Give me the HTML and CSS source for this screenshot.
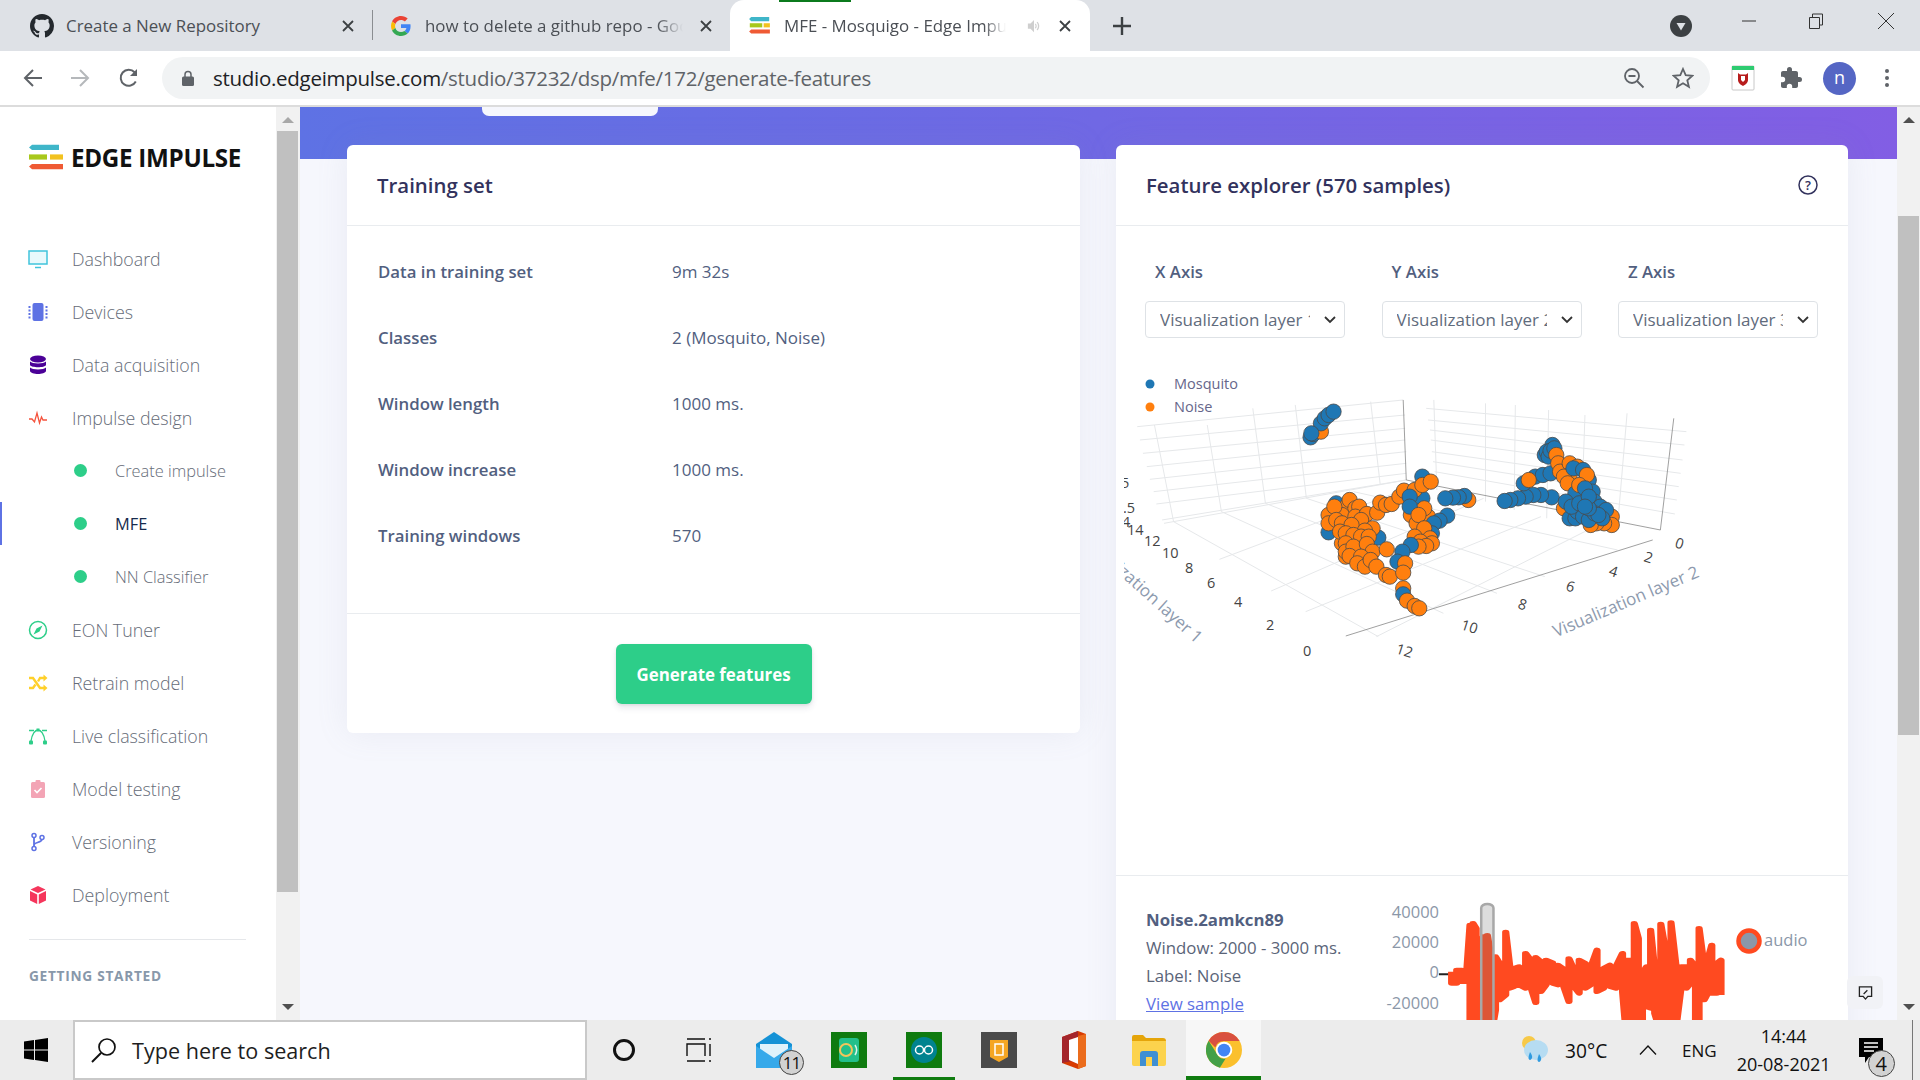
FILE: index.html
```html
<!DOCTYPE html>
<html lang="en">
<head>
<meta charset="utf-8">
<title>MFE - Mosquigo - Edge Impulse</title>
<link rel="stylesheet" href="styles.css">
</head>
<body>
<header class="tabstrip">
  <div class="tab tab-one">
    <svg class="fav" viewBox="0 0 16 16" width="24" height="24"><path fill="#24292e" d="M8 0C3.58 0 0 3.58 0 8c0 3.54 2.29 6.53 5.47 7.59.4.07.55-.17.55-.38 0-.19-.01-.82-.01-1.49-2.01.37-2.53-.49-2.69-.94-.09-.23-.48-.94-.82-1.13-.28-.15-.68-.52-.01-.53.63-.01 1.08.58 1.23.82.72 1.21 1.87.87 2.33.66.07-.52.28-.87.51-1.07-1.78-.2-3.64-.89-3.64-3.95 0-.87.31-1.59.82-2.15-.08-.2-.36-1.02.08-2.12 0 0 .67-.21 2.2.82.64-.18 1.32-.27 2-.27.68 0 1.36.09 2 .27 1.53-1.04 2.2-.82 2.2-.82.44 1.1.16 1.92.08 2.12.51.56.82 1.27.82 2.15 0 3.07-1.87 3.75-3.65 3.95.29.25.54.73.54 1.48 0 1.07-.01 1.93-.01 2.2 0 .21.15.46.55.38A8.013 8.013 0 0016 8c0-4.42-3.58-8-8-8z"/></svg>
    <span class="tab-title">Create a New Repository</span>
    <svg class="tab-x" viewBox="0 0 12 12" width="12" height="12"><path d="M1 1l10 10M11 1L1 11" stroke="#3c4043" stroke-width="1.8"/></svg>
  </div>
  <div class="tab-sep"></div>
  <div class="tab tab-two">
    <svg class="fav" viewBox="0 0 48 48" width="20" height="20"><path fill="#EA4335" d="M24 9.5c3.54 0 6.71 1.22 9.21 3.6l6.85-6.85C35.9 2.38 30.47 0 24 0 14.62 0 6.51 5.38 2.56 13.22l7.98 6.19C12.43 13.72 17.74 9.5 24 9.5z"/><path fill="#4285F4" d="M46.98 24.55c0-1.57-.15-3.09-.38-4.55H24v9.02h12.94c-.58 2.96-2.26 5.48-4.78 7.18l7.73 6c4.51-4.18 7.09-10.36 7.09-17.65z"/><path fill="#FBBC05" d="M10.53 28.59c-.48-1.45-.76-2.99-.76-4.59s.27-3.14.76-4.59l-7.98-6.19C.92 16.46 0 20.12 0 24c0 3.88.92 7.54 2.56 10.78l7.97-6.19z"/><path fill="#34A853" d="M24 48c6.48 0 11.93-2.13 15.89-5.81l-7.73-6c-2.15 1.45-4.92 2.3-8.16 2.3-6.26 0-11.57-4.22-13.47-9.91l-7.98 6.19C6.51 42.62 14.62 48 24 48z"/></svg>
    <span class="tab-title fade">how to delete a github repo - Google</span>
    <svg class="tab-x" viewBox="0 0 12 12" width="12" height="12"><path d="M1 1l10 10M11 1L1 11" stroke="#3c4043" stroke-width="1.8"/></svg>
  </div>
  <div class="tab tab-active">
    <svg class="fav" viewBox="0 0 30 26" width="21" height="18"><path fill="#3fb6c9" d="M3 0h26v6H3L0 3z"/><path fill="#a8c81c" d="M1 9h18v6H1z"/><path fill="#f2c21f" d="M21 9h9v6h-9z"/><path fill="#ef5a34" d="M3 18h27v6H3l-3-3z"/></svg>
    <span class="tab-title fade">MFE - Mosquigo - Edge Impulse</span>
    <svg class="tab-speaker" viewBox="0 0 16 16" width="14" height="14"><path fill="#cfcfcf" d="M1 5h3l4-4v14l-4-4H1zM10 5c1.5 1.5 1.500 4.500 0 6l-1-1c1-1 1-3 0-4zM12 3c2.700 2.700 2.700 7.300 0 10l-1-1c2-2 2-6 0-8z"/></svg>
    <svg class="tab-x" viewBox="0 0 12 12" width="12" height="12"><path d="M1 1l10 10M11 1L1 11" stroke="#3c4043" stroke-width="1.8"/></svg>
    <div class="audio-bar"></div>
  </div>
  <svg class="plus" viewBox="0 0 18 18" width="18" height="18"><path d="M9 0v18M0 9h18" stroke="#3c4043" stroke-width="2.400"/></svg>
  <svg class="tabsearch" viewBox="0 0 22 22" width="22" height="22"><circle cx="11" cy="11" r="11" fill="#3c4043"/><path d="M6.500 8h9L11 15.500z" fill="#dee1e6"/></svg>
  <svg class="win-btn win-min" viewBox="0 0 18 18" width="18" height="18"><path d="M2 9h14" stroke="#333" stroke-width="1"/></svg>
  <svg class="win-btn win-max" viewBox="0 0 18 18" width="18" height="18"><path d="M2.500 5.500h10v11h-10zM5.500 5.500v-3.500h10v11h-3" fill="none" stroke="#333" stroke-width="1"/></svg>
  <svg class="win-btn win-close" viewBox="0 0 18 18" width="18" height="18"><path d="M1 1l16 16M17 1L1 17" stroke="#333" stroke-width="1"/></svg>
</header>

<nav class="toolbar">
  <svg class="tool-back" viewBox="0 0 20 20" width="20" height="20"><path d="M19 10H2M10 2l-8 8 8 8" fill="none" stroke="#5f6368" stroke-width="2"/></svg>
  <svg class="tool-fwd" viewBox="0 0 20 20" width="20" height="20"><path d="M1 10h17M10 2l8 8-8 8" fill="none" stroke="#b5b8bb" stroke-width="2"/></svg>
  <svg class="tool-reload" viewBox="0 0 20 20" width="20" height="20"><path d="M16.800 13.500A8 8 0 1 1 15.600 4.300" fill="none" stroke="#5f6368" stroke-width="2"/><path d="M18 1v7h-7z" fill="#5f6368"/></svg>
  <div class="omnibox">
    <svg class="lock" viewBox="0 0 12 16" width="12" height="16"><path d="M3 7V4.500a3 3 0 0 1 6 0V7" fill="none" stroke="#5f6368" stroke-width="1.500"/><rect x="0" y="6.500" width="12" height="9.500" rx="1.500" fill="#5f6368"/></svg>
    <span class="url"><span class="url-host">studio.edgeimpulse.com</span>/studio/37232/dsp/mfe/172/generate-features</span>
    <svg class="omni-zoom" viewBox="0 0 22 22" width="22" height="22"><circle cx="9" cy="9" r="7" fill="none" stroke="#5f6368" stroke-width="1.800"/><path d="M5.500 9h7M14 14l6.500 6.500" stroke="#5f6368" stroke-width="1.800"/></svg>
    <svg class="omni-star" viewBox="0 0 22 22" width="22" height="22"><path d="M11 2l2.700 6.200 6.700.6-5.100 4.400 1.600 6.600L11 16.300l-5.900 3.500 1.600-6.600L1.600 8.800l6.700-.6z" fill="none" stroke="#5f6368" stroke-width="1.800"/></svg>
  </div>
  <svg class="ext" viewBox="0 0 24 26" width="24" height="26"><rect x="1" y="1" width="22" height="24" rx="1" fill="#fff" stroke="#c8c8c8"/><rect x="1" y="1" width="22" height="4" fill="#2ecc71"/><path d="M7 8l2 1.500h6L17 8v7c0 3-3 5-5 6-2-1-5-3-5-6z" fill="#b71c1c"/><path d="M10 11h4v4l-2 2-2-2z" fill="#fff"/></svg>
  <svg class="puzzle" viewBox="0 0 24 24" width="24" height="24"><path fill="#5f6368" d="M20.500 11H19V7c0-1.100-.9-2-2-2h-4V3.500a2.500 2.500 0 0 0-5 0V5H4c-1.100 0-2 .9-2 2v3.800h1.500a2.700 2.700 0 0 1 0 5.400H2V20c0 1.100.9 2 2 2h3.800v-1.500a2.700 2.700 0 0 1 5.400 0V22H17c1.100 0 2-.9 2-2v-4h1.500a2.500 2.500 0 0 0 0-5z"/></svg>
  <div class="avatar">n</div>
  <svg class="kebab" viewBox="0 0 6 22" width="6" height="22"><circle cx="3" cy="4" r="2" fill="#5f6368"/><circle cx="3" cy="11" r="2" fill="#5f6368"/><circle cx="3" cy="18" r="2" fill="#5f6368"/></svg>
</nav>

<div class="viewport">
  <aside class="sidebar">
    <div class="side-inner">
      <div class="logo">
        <svg viewBox="0 0 36 30" width="36" height="26" preserveAspectRatio="none"><path fill="#3fb6c9" d="M3 1h27v6H3L0 4z"/><path fill="#a8c81c" d="M0 12h18v6H0z"/><path fill="#f2c21f" d="M21 12h13v6H21z"/><path fill="#ef5a34" d="M3 23h31v6H3l-3-3z"/></svg>
        <span>EDGE IMPULSE</span>
      </div>
      <ul class="menu">
        <li class="item"><svg class="ico" viewBox="0 0 20 20"><rect x="1" y="2" width="18" height="13" fill="#e8f9fc" stroke="#40c4dc" stroke-width="1.500"/><path d="M7 18.500h6" stroke="#40c4dc" stroke-width="1.500"/></svg><span>Dashboard</span></li>
        <li class="item"><svg class="ico" viewBox="0 0 20 20"><rect x="4.500" y="1" width="11" height="18" rx="2" fill="#5e72e4"/><path d="M1.500 4v13M18.500 4v13" stroke="#5e72e4" stroke-width="2" stroke-dasharray="2 1.500"/></svg><span>Devices</span></li>
        <li class="item"><svg class="ico" viewBox="0 0 20 20"><ellipse cx="10" cy="4" rx="8" ry="3.500" fill="#4b0097"/><path d="M2 6.500c2 2.500 14 2.500 16 0v3.500c-1 3-15 3-16 0zM2 12.500c2 2.500 14 2.500 16 0V16c-1 4-15 4-16 0z" fill="#4b0097"/></svg><span>Data acquisition</span></li>
        <li class="item"><svg class="ico" viewBox="0 0 20 20"><path d="M1 11h3l2.500 3L9 5l2.500 10L13.500 9l1.500 3h4" fill="none" stroke="#f5533d" stroke-width="1.300"/></svg><span>Impulse design</span></li>
        <li class="item sub"><i class="dot"></i><span>Create impulse</span></li>
        <li class="item sub active"><i class="dot"></i><span>MFE</span></li>
        <li class="item sub"><i class="dot"></i><span>NN Classifier</span></li>
        <li class="item"><svg class="ico" viewBox="0 0 20 20"><circle cx="10" cy="10" r="8.500" fill="none" stroke="#2dce89" stroke-width="1.500"/><path d="M14.500 5.500L11.500 11.500 5.500 14.500 8.500 8.500z" fill="#2dce89"/></svg><span>EON Tuner</span></li>
        <li class="item"><svg class="ico" viewBox="0 0 20 20"><path d="M1 5h4l7 10h4M1 15h4l2.500-3.500M10 8.500L12 5h4" fill="none" stroke="#ffd02a" stroke-width="2.400"/><path d="M15.500 1.500l4 3.500-4 3.500zM15.500 11.500l4 3.500-4 3.500z" fill="#ffd02a"/></svg><span>Retrain model</span></li>
        <li class="item"><svg class="ico" viewBox="0 0 20 20"><path d="M3 15C4 8 7 4 10 4s6 4 7 11" fill="none" stroke="#2dce89" stroke-width="1.300"/><path d="M1 4.500h5M14 4.500h5" stroke="#2dce89" stroke-width="1.300"/><rect x="1" y="14.500" width="4" height="4" rx="1" fill="#2dce89"/><rect x="15" y="14.500" width="4" height="4" rx="1" fill="#2dce89"/><rect x="8.500" y="2.500" width="3" height="3" fill="#2dce89"/></svg><span>Live classification</span></li>
        <li class="item"><svg class="ico" viewBox="0 0 20 20"><rect x="3" y="3" width="14" height="16" rx="1.500" fill="#f3a4b5"/><rect x="7.500" y="1" width="5" height="4" rx="1" fill="#f3a4b5"/><path d="M6.500 11l2.500 2.500 4.500-4.500" fill="none" stroke="#fff" stroke-width="1.600"/></svg><span>Model testing</span></li>
        <li class="item"><svg class="ico" viewBox="0 0 20 20"><path d="M6 5v10M6 13c0-3 8-2 8-6" fill="none" stroke="#5e72e4" stroke-width="1.800"/><circle cx="6" cy="3.500" r="2" fill="#fff" stroke="#5e72e4" stroke-width="1.500"/><circle cx="6" cy="16.500" r="2" fill="#fff" stroke="#5e72e4" stroke-width="1.500"/><circle cx="14" cy="5.500" r="2" fill="#fff" stroke="#5e72e4" stroke-width="1.500"/></svg><span>Versioning</span></li>
        <li class="item"><svg class="ico" viewBox="0 0 20 20"><path d="M10 1l7.500 3.500L10 8 2.500 4.500z" fill="#f5365c"/><path d="M2 6l7.200 3.500V19L2 15.500zM18 6l-7.200 3.500V19l7.200-3.500z" fill="#f5365c"/></svg><span>Deployment</span></li>
      </ul>
      <hr class="side-rule">
      <div class="side-head">GETTING STARTED</div>
    </div>
    <div class="vscroll vscroll-left">
      <i class="arrow up"></i>
      <div class="thumb thumb-left"></div>
      <i class="arrow down"></i>
    </div>
  </aside>

  <main class="main">
    <div class="band"><div class="pill"></div></div>
    <div class="cards">
      <section class="card card-train">
        <h2 class="card-title">Training set</h2>
        <dl class="stats">
          <div class="stat"><dt>Data in training set</dt><dd>9m 32s</dd></div>
          <div class="stat"><dt>Classes</dt><dd>2 (Mosquito, Noise)</dd></div>
          <div class="stat"><dt>Window length</dt><dd>1000 ms.</dd></div>
          <div class="stat"><dt>Window increase</dt><dd>1000 ms.</dd></div>
          <div class="stat"><dt>Training windows</dt><dd>570</dd></div>
        </dl>
        <div class="card-foot"><button class="btn" type="button">Generate features</button></div>
      </section>

      <section class="card card-explorer">
        <h2 class="card-title title-row">Feature explorer (570 samples)
          <svg class="help" viewBox="0 0 20 20" width="20" height="20"><circle cx="10" cy="10" r="9" fill="none" stroke="#32325d" stroke-width="1.500"/><text x="10" y="14.500" text-anchor="middle" class="help-q">?</text></svg>
        </h2>
        <div class="axes">
          <div class="axis"><label>X Axis</label><div class="select"><span>Visualization layer 1</span><svg viewBox="0 0 12 8" width="12" height="8"><path d="M1 1l5 5 5-5" fill="none" stroke="#333" stroke-width="1.800"/></svg></div></div>
          <div class="axis"><label>Y Axis</label><div class="select"><span>Visualization layer 2</span><svg viewBox="0 0 12 8" width="12" height="8"><path d="M1 1l5 5 5-5" fill="none" stroke="#333" stroke-width="1.800"/></svg></div></div>
          <div class="axis"><label>Z Axis</label><div class="select"><span>Visualization layer 3</span><svg viewBox="0 0 12 8" width="12" height="8"><path d="M1 1l5 5 5-5" fill="none" stroke="#333" stroke-width="1.800"/></svg></div></div>
        </div>

        <svg class="plot" viewBox="4 0 596 320" width="596" height="320">
          <g transform="scale(.3827 .3333)">
            <g class="grid">
              <path d="M45 200L740 120M52 240L745 165M60 280L745 205M70 320L745 240M78 358L748 275M88 395L748 310M95 432L748 340M115 490L748 360"/>
              <path d="M90 195L140 485M228 195L265 455M347 145L380 430M458 135L487 415M655 125L680 375"/>
              <path d="M800 145L1480 215M805 180L1475 255M810 210L1470 300M812 240L1465 340M815 275L1460 380M818 305L1455 420M822 335L1450 462"/>
              <path d="M820 120L828 390M955 130L955 425M1033 135L1030 450M1120 150L1115 475M1215 165L1205 490M1325 160L1300 500"/>
              <path d="M140 485L675 830M265 455L845 760M380 430L985 700M487 415L1110 650M610 395L1300 570"/>
              <path d="M110 480L748 360M260 598L810 360M395 693L950 415M485 755L1100 470M670 830L1240 500"/>
            </g>
            <path class="axisline" d="M740 120L748 360M1447 175L1412 510M748 360L1412 510M590 828L1392 540"/>
            <g class="pts">
              <ellipse class="b" cx="498" cy="232"/><ellipse class="b" cx="505" cy="222"/><ellipse class="o" cx="525" cy="215"/><ellipse class="b" cx="525" cy="190"/><ellipse class="b" cx="535" cy="175"/><ellipse class="b" cx="545" cy="165"/><ellipse class="b" cx="558" cy="155"/><ellipse class="b" cx="500" cy="220"/>

              <ellipse class="b" cx="545" cy="517"/><ellipse class="b" cx="675" cy="533"/><ellipse class="b" cx="565" cy="430"/>
              <ellipse class="o" cx="590" cy="590"/><ellipse class="o" cx="580" cy="550"/><ellipse class="o" cx="545" cy="465"/><ellipse class="o" cx="595" cy="435"/><ellipse class="o" cx="600" cy="420"/><ellipse class="o" cx="615" cy="445"/><ellipse class="o" cx="625" cy="440"/><ellipse class="o" cx="580" cy="465"/><ellipse class="o" cx="615" cy="470"/><ellipse class="o" cx="645" cy="462"/><ellipse class="o" cx="672" cy="458"/><ellipse class="o" cx="680" cy="428"/><ellipse class="o" cx="695" cy="435"/><ellipse class="o" cx="710" cy="432"/><ellipse class="o" cx="730" cy="410"/><ellipse class="o" cx="742" cy="392"/><ellipse class="o" cx="545" cy="490"/><ellipse class="o" cx="560" cy="440"/><ellipse class="o" cx="565" cy="480"/><ellipse class="o" cx="580" cy="490"/><ellipse class="o" cx="630" cy="480"/><ellipse class="o" cx="605" cy="495"/><ellipse class="o" cx="660" cy="505"/><ellipse class="o" cx="640" cy="512"/><ellipse class="o" cx="575" cy="515"/><ellipse class="o" cx="590" cy="520"/><ellipse class="o" cx="610" cy="525"/><ellipse class="o" cx="630" cy="530"/><ellipse class="o" cx="650" cy="530"/><ellipse class="o" cx="590" cy="550"/><ellipse class="o" cx="590" cy="575"/><ellipse class="o" cx="610" cy="560"/><ellipse class="o" cx="645" cy="552"/><ellipse class="o" cx="660" cy="575"/><ellipse class="o" cx="600" cy="588"/><ellipse class="o" cx="630" cy="590"/><ellipse class="o" cx="620" cy="610"/><ellipse class="o" cx="640" cy="620"/><ellipse class="o" cx="655" cy="600"/><ellipse class="o" cx="670" cy="620"/><ellipse class="o" cx="695" cy="645"/><ellipse class="o" cx="705" cy="650"/>

              <ellipse class="b" cx="790" cy="350"/><ellipse class="b" cx="790" cy="415"/><ellipse class="o" cx="770" cy="390"/><ellipse class="o" cx="790" cy="375"/><ellipse class="o" cx="812" cy="365"/><ellipse class="b" cx="757" cy="410"/><ellipse class="o" cx="760" cy="465"/><ellipse class="o" cx="805" cy="470"/><ellipse class="o" cx="795" cy="445"/><ellipse class="b" cx="757" cy="440"/><ellipse class="o" cx="775" cy="490"/><ellipse class="o" cx="780" cy="465"/><ellipse class="b" cx="855" cy="467"/><ellipse class="b" cx="835" cy="482"/><ellipse class="b" cx="820" cy="490"/><ellipse class="b" cx="815" cy="520"/><ellipse class="o" cx="795" cy="505"/><ellipse class="o" cx="770" cy="530"/><ellipse class="o" cx="810" cy="535"/><ellipse class="o" cx="785" cy="545"/><ellipse class="o" cx="815" cy="550"/><ellipse class="o" cx="800" cy="558"/><ellipse class="o" cx="780" cy="560"/><ellipse class="b" cx="760" cy="555"/><ellipse class="b" cx="738" cy="575"/><ellipse class="b" cx="725" cy="605"/><ellipse class="o" cx="745" cy="610"/><ellipse class="o" cx="740" cy="638"/><ellipse class="o" cx="697" cy="568"/>
              <ellipse class="o" cx="740" cy="685"/><ellipse class="b" cx="740" cy="703"/><ellipse class="o" cx="750" cy="722"/><ellipse class="o" cx="770" cy="738"/><ellipse class="o" cx="782" cy="745"/>

              <ellipse class="o" cx="910" cy="420"/><ellipse class="b" cx="900" cy="408"/><ellipse class="b" cx="885" cy="412"/><ellipse class="b" cx="870" cy="413"/><ellipse class="b" cx="850" cy="415"/>

              <ellipse class="b" cx="1128" cy="412"/><ellipse class="b" cx="1100" cy="405"/><ellipse class="b" cx="1080" cy="405"/><ellipse class="b" cx="1060" cy="410"/><ellipse class="b" cx="1040" cy="415"/><ellipse class="b" cx="1020" cy="420"/><ellipse class="b" cx="1005" cy="423"/>
              <ellipse class="b" cx="1055" cy="370"/><ellipse class="b" cx="1085" cy="350"/><ellipse class="b" cx="1105" cy="345"/><ellipse class="b" cx="1125" cy="340"/><ellipse class="o" cx="1068" cy="360"/>
              <ellipse class="b" cx="1130" cy="255"/><ellipse class="b" cx="1110" cy="285"/><ellipse class="b" cx="1115" cy="275"/><ellipse class="b" cx="1120" cy="290"/><ellipse class="b" cx="1125" cy="272"/><ellipse class="b" cx="1135" cy="265"/><ellipse class="o" cx="1140" cy="285"/><ellipse class="o" cx="1145" cy="310"/><ellipse class="o" cx="1150" cy="335"/><ellipse class="o" cx="1175" cy="310"/><ellipse class="o" cx="1175" cy="345"/><ellipse class="o" cx="1160" cy="350"/><ellipse class="o" cx="1195" cy="320"/><ellipse class="b" cx="1185" cy="325"/><ellipse class="b" cx="1210" cy="330"/><ellipse class="b" cx="1225" cy="360"/><ellipse class="o" cx="1220" cy="345"/><ellipse class="o" cx="1170" cy="370"/><ellipse class="o" cx="1160" cy="445"/><ellipse class="b" cx="1190" cy="400"/><ellipse class="o" cx="1200" cy="375"/><ellipse class="b" cx="1235" cy="395"/><ellipse class="b" cx="1215" cy="385"/><ellipse class="o" cx="1285" cy="470"/><ellipse class="o" cx="1285" cy="495"/><ellipse class="o" cx="1265" cy="490"/><ellipse class="o" cx="1245" cy="490"/><ellipse class="o" cx="1230" cy="495"/><ellipse class="b" cx="1165" cy="425"/><ellipse class="b" cx="1175" cy="475"/><ellipse class="b" cx="1190" cy="475"/><ellipse class="b" cx="1195" cy="455"/><ellipse class="b" cx="1180" cy="440"/><ellipse class="b" cx="1240" cy="425"/><ellipse class="b" cx="1255" cy="440"/><ellipse class="b" cx="1270" cy="450"/><ellipse class="b" cx="1260" cy="475"/><ellipse class="b" cx="1210" cy="470"/><ellipse class="b" cx="1225" cy="480"/><ellipse class="b" cx="1240" cy="460"/><ellipse class="b" cx="1250" cy="465"/><ellipse class="b" cx="1225" cy="445"/><ellipse class="b" cx="1200" cy="430"/><ellipse class="b" cx="1225" cy="410"/><ellipse class="b" cx="1215" cy="440"/>
            </g>
          </g>
          <circle class="lg-b" cx="30" cy="24" r="4.500"/><text class="lg" x="54" y="29">Mosquito</text>
          <circle class="lg-o" cx="30" cy="47" r="4.500"/><text class="lg" x="54" y="52">Noise</text>
          <g class="tick">
            <text x="1" y="128">5</text><text x="3" y="153">.5</text><text x="2" y="167">4</text>
            <text x="7" y="175">14</text><text x="24" y="186">12</text><text x="42" y="198">10</text><text x="65" y="213">8</text><text x="87" y="228">6</text><text x="114" y="247">4</text><text x="146" y="270">2</text><text x="183" y="296">0</text>
            <text transform="translate(554 187) rotate(18)">0</text><text transform="translate(523 201) rotate(18)">2</text><text transform="translate(488 215) rotate(18)">4</text><text transform="translate(445 230) rotate(18)">6</text><text transform="translate(397 248) rotate(18)">8</text><text transform="translate(340 269) rotate(18)">10</text><text transform="translate(275 293) rotate(18)">12</text>
          </g>
          <text class="axis-title" transform="translate(76 284) rotate(42)" text-anchor="end">Visualization layer 1</text>
          <text class="axis-title" transform="translate(508 247) rotate(-23)" text-anchor="middle">Visualization layer 2</text>
        </svg>

        <div class="sample">
          <div class="sample-info">
            <strong>Noise.2amkcn89</strong>
            <span>Window: 2000 - 3000 ms.</span>
            <span>Label: Noise</span>
            <a href="#sample">View sample</a>
          </div>
          <svg class="wave" viewBox="0 0 430 150" width="430" height="150">
            <g class="wave-y">
              <text x="39" y="30">40000</text><text x="39" y="60">20000</text><text x="39" y="90">0</text><text x="39" y="121">-20000</text>
            </g>
            <g transform="translate(-280 -28) scale(.5102 .3333)">
              <path d="M625 343H1040" stroke="#222" stroke-width="2" vector-effect="non-scaling-stroke"/>
              <path class="wave-line" d="M650 335V370H660V330H670V365H680V325L686 195V480L692 520V190L698 205V520L704 500V320L712 230V520L720 520V226L728 300V520L736 450V290L744 310V420L756 405V216L764 320V385L772 380V325L782 320V375L795 385V280L805 300V380L815 428V292L825 305V395L835 375V300L848 308V370L858 375V315L868 325V372L880 425V296L890 330V380L900 400V300L912 310V385L922 375V325L935 270V395L948 385V325L960 315V380L972 385V320L985 280V395L992 520V300L1000 300V520L1008 520V190L1016 235V520L1024 500V340L1032 320V440L1040 445V210L1048 330V460L1060 520V192L1068 260V520L1080 520V188L1090 320V500L1100 380V320L1110 320V385L1118 370V300L1128 320V500L1135 510V205L1145 320V420L1152 400V300L1160 255V400L1170 400V310L1178 300V405"/>
              <rect class="wave-win" x="708" y="132" width="24" height="400" rx="12"/>
            </g>
            <circle class="wave-dot" cx="349" cy="53" r="10.500"/>
            <text class="wave-lg" x="364" y="58">audio</text>
          </svg>
        </div>
      </section>
    </div>
    <div class="feedback"><svg viewBox="0 0 16 16" width="15" height="16"><path d="M1.500 1.500h13v10h-4l-2.500 3-2.500-3h-4z" fill="none" stroke="#222" stroke-width="1.400"/><path d="M6 9l4-4" stroke="#222" stroke-width="1.400"/></svg></div>
  </main>

  <div class="vscroll vscroll-right">
    <i class="arrow up"></i>
    <div class="thumb thumb-right"></div>
    <i class="arrow down"></i>
  </div>
</div>

<footer class="taskbar">
  <div class="start"><svg viewBox="0 0 24 24" width="24" height="24"><path fill="#000" d="M0 3.400l10-1.400v9.500H0zM11 1.900L24 0v11.500H11zM0 12.500h10V22L0 20.600zM11 12.500h13V24l-13-1.900z"/></svg></div>
  <div class="search">
    <svg viewBox="0 0 26 26" width="26" height="26"><circle cx="16" cy="10" r="8" fill="none" stroke="#111" stroke-width="1.700"/><path d="M10 16L1 25" stroke="#111" stroke-width="1.900"/></svg>
    <span>Type here to search</span>
  </div>
  <div class="slots">
    <div class="slot"><i class="ring"></i></div>
    <div class="slot"><svg viewBox="0 0 26 24" width="26" height="24"><path d="M1 1h18M1 23h18M1 18V6h18v12M23 1h2M23 23h2M24 6v12" fill="none" stroke="#111" stroke-width="1.400"/></svg></div>
    <div class="slot"><svg viewBox="0 0 38 36" width="38" height="36"><path d="M1 12L19 0l18 12v24H1z" fill="#1592d6"/><path d="M5 12h28v8L19 28 5 20z" fill="#dff2fb"/><path d="M1 14l18 12 18-12v22H1z" fill="#36a9ea"/></svg><b class="badge badge-mail">11</b></div>
    <div class="slot"><svg viewBox="0 0 36 36" width="36" height="36"><rect width="36" height="36" fill="#0f7b0f"/><rect x="8" y="6" width="20" height="24" rx="3" fill="#22c08a"/><circle cx="15" cy="18" r="6" fill="none" stroke="#f4c55a" stroke-width="2"/><path d="M24 13c2 3 2 7 0 10" fill="none" stroke="#d8f5e8" stroke-width="1.500"/></svg></div>
    <div class="slot slot-open"><svg viewBox="0 0 36 36" width="36" height="36"><rect width="36" height="36" fill="#0f7b0f"/><circle cx="18" cy="18" r="13" fill="#00838f"/><circle cx="13.500" cy="18" r="4" fill="none" stroke="#fff" stroke-width="1.500"/><circle cx="22.500" cy="18" r="4" fill="none" stroke="#fff" stroke-width="1.500"/></svg></div>
    <div class="slot"><svg viewBox="0 0 36 36" width="36" height="36"><rect width="36" height="36" fill="#4a4a4a"/><path d="M9 8h18v17l-9 5-9-5z" fill="#f5a623"/><rect x="14" y="12" width="8" height="11" fill="none" stroke="#fff" stroke-width="1.500"/></svg></div>
    <div class="slot"><svg viewBox="0 0 32 38" width="32" height="38"><path d="M20 0L4 6v26l16 6 8-3V3z" fill="#d83b01"/><path d="M20 0L4 6v26l16-3V33L11 29V9l9-3z" fill="#a4262c"/><path d="M20 5l8-2v32l-8 3z" fill="#eb6c1c"/><path d="M11 9l9-3v27l-9-4z" fill="#fff"/></svg></div>
    <div class="slot"><svg viewBox="0 0 34 32" width="34" height="32"><path d="M0 3a2 2 0 0 1 2-2h9l3 3h17a3 3 0 0 1 3 3v4H0z" fill="#e5a50a"/><path d="M0 7h34v23a2 2 0 0 1-2 2H2a2 2 0 0 1-2-2z" fill="#fcd34d"/><path d="M8 32V20a3 3 0 0 1 3-3h12a3 3 0 0 1 3 3v12h-6V23h-6v9z" fill="#3f8fd2"/></svg></div>
    <div class="slot slot-chrome"><svg viewBox="0 0 48 48" width="36" height="36"><circle cx="24" cy="24" r="24" fill="#fbc02d"/><path d="M24 0a24 24 0 0 1 20.800 12H24a12 12 0 0 0-11.500 8.500L3.500 11.500A24 24 0 0 1 24 0z" fill="#d9503f"/><path d="M3.500 11.500L15 30a10.500 10.500 0 0 0 11 5.500L18.500 47.500A24 24 0 0 1 3.500 11.500z" fill="#43a047"/><circle cx="24" cy="24" r="11" fill="#fff"/><circle cx="24" cy="24" r="8.500" fill="#4285f4"/></svg></div>
  </div>
  <div class="tray">
    <svg class="weather" viewBox="0 0 32 32" width="32" height="32"><circle cx="11" cy="9" r="7" fill="#f7c948"/><ellipse cx="18" cy="16" rx="12" ry="10" fill="#b6dcf2"/><path d="M12 18c2 3 3 5 1.500 7s-3 .5-3-1 .5-3 1.500-6zM21 20c2 3 3 5 1.500 7s-3 .5-3-1 .5-3 1.500-6z" fill="#2f9be0"/></svg>
    <span class="temp">30°C</span>
    <svg class="caret" viewBox="0 0 18 10" width="18" height="10"><path d="M1 9.500L9 1l8 8.500" fill="none" stroke="#111" stroke-width="1.300"/></svg>
    <span class="lang">ENG</span>
    <div class="clock"><span>14:44</span><span>20-08-2021</span></div>
    <div class="notify"><svg viewBox="0 0 24 26" width="24" height="26"><path d="M0 0h24v19H10l-4 6v-6H0z" fill="#000"/><path d="M5 5h14M5 9h14M5 13h10" stroke="#fff" stroke-width="1.300"/></svg><b class="badge badge-note">4</b></div>
  </div>
</footer>
</body>
</html>
```
FILE: styles.css
```css
* { box-sizing: border-box; }
html, body { margin: 0; height: 100%; }
body {
  width: 1920px; height: 1080px; overflow: hidden;
  display: flex; flex-direction: column;
  font-family: "Open Sans", "Noto Sans", sans-serif; color: #525f7f; background: #fff;
}
svg { flex: none; display: block; }

/* browser chrome */
.tabstrip { height: 51px; flex: none; background: #dee1e6; display: flex; align-items: center; }
.tab { height: 51px; display: flex; align-items: center; position: relative; flex: none; }
.tab-title { font-size: 16.9px; color: #4b4f55; white-space: nowrap; overflow: hidden; }
.tab-one { width: 372px; padding-left: 30px; }
.tab-one .tab-title { margin-left: 12px; width: 276px; }
.tab-sep { width: 1px; height: 30px; background: #8a8d91; flex: none; margin-top: -2px; }
.tab-two { width: 357px; padding-left: 18px; }
.tab-two .tab-title { margin-left: 14px; width: 258px; }
.tab-two .tab-x { margin-left: 17px; }
.tab-active { width: 360px; padding-left: 19px; background: #fff; border-radius: 14px 14px 0 0; }
.tab-active .tab-title { margin-left: 14px; width: 222px; }
.tab-speaker { margin-left: 21px; }
.tab-active .tab-x { margin-left: 18px; }
.fade { -webkit-mask-image: linear-gradient(90deg, #000 90%, transparent); mask-image: linear-gradient(90deg, #000 90%, transparent); }
.audio-bar { position: absolute; left: 49px; top: 0; width: 72px; height: 2px; background: #0b7a1d; }
.plus { margin-left: 23px; }
.tabsearch { margin-left: 539px; }
.win-btn { margin-top: -10px; }
.win-min { margin-left: 48px; }
.win-max { margin-left: 49px; }
.win-close { margin-left: 52px; }

.toolbar { height: 56px; flex: none; background: #fff; display: flex; align-items: center; padding-left: 23px; border-bottom: 2px solid #dcdcdc; }
.tool-fwd { margin-left: 27px; }
.tool-reload { margin-left: 29px; }
.omnibox { margin-left: 23px; width: 1548px; height: 42px; border-radius: 21px; background: #f1f3f4; display: flex; align-items: center; padding-left: 20px; }
.url { margin-left: 19px; font-size: 20.5px; color: #5f6368; white-space: nowrap; letter-spacing: -.28px; }
.url-host { color: #202124; }
.omni-zoom { margin-left: auto; }
.omni-star { margin-left: 27px; margin-right: 16px; }
.ext { margin-left: 21px; }
.puzzle { margin-left: 24px; }
.avatar { margin-left: 20px; width: 33px; height: 33px; border-radius: 50%; background: #5566c4; color: #fff; font-size: 18px; display: flex; align-items: center; justify-content: center; padding-bottom: 3px; }
.kebab { margin-left: 28px; }

/* page viewport */
.viewport { height: 913px; flex: none; display: flex; overflow: hidden; }
.sidebar { width: 300px; flex: none; display: flex; background: #fff; }
.side-inner { width: 276px; flex: none; padding-left: 29px; }
.logo { display: flex; align-items: center; height: 26px; margin-top: 37px; }
.logo span { margin-left: 6px; font-size: 24.2px; font-weight: 700; color: #111; letter-spacing: -.3px; }
.menu { list-style: none; margin: 62px 0 0; padding: 0; }
.item { height: 53px; display: flex; align-items: center; font-size: 17.8px; font-weight: 300; color: #666c78; position: relative; white-space: nowrap; }
.ico { width: 20px; height: 20px; margin-right: 24px; margin-left: -1px; }
.sub { padding-left: 45px; font-size: 16.4px; }
.dot { width: 13px; height: 13px; border-radius: 50%; background: #2dce89; margin-right: 28px; }
.active { color: #172b4d; font-weight: 400; }
.active::before { content: ""; position: absolute; left: -29px; top: 5px; width: 2px; height: 43px; background: #5e72e4; }
.side-rule { width: 217px; margin: 18px 0 0; border: 0; border-top: 1px solid #e5e7ea; }
.side-head { margin-top: 26px; font-size: 13.7px; font-weight: 700; letter-spacing: .7px; color: #8898aa; }

.vscroll { background: #f1f1f1; display: flex; flex-direction: column; align-items: center; flex: none; height: 100%; }
.vscroll-left { width: 24px; }
.vscroll-right { width: 23px; }
.thumb { width: 21px; background: #c0c0c0; }
.thumb-left { height: 761px; margin: 8px 2px 0 0; }
.thumb-right { height: 519px; margin-top: 93px; }
.arrow { width: 0; height: 0; border-left: 6px solid transparent; border-right: 6px solid transparent; display: block; flex: none; }
.arrow.up { border-bottom: 6px solid #a8a8a8; margin-top: 10px; }
.vscroll-right .arrow.up { border-bottom-color: #505050; }
.arrow.down { border-top: 6px solid #505050; margin-top: auto; margin-bottom: 10px; }

.main { flex: 1; min-width: 0; background: #f6f7fd; position: relative; overflow: hidden; }
.band { height: 52px; background: linear-gradient(87deg, #5e72e4, #825ee4); position: relative; }
.pill { position: absolute; left: 182px; top: 0; width: 176px; height: 9px; background: #f6f7fd; border-radius: 0 0 7px 7px; }
.cards { position: relative; display: grid; grid-template-columns: 733px 732px; column-gap: 36px; margin: -14px 0 0 47px; align-items: start; }
.card { background: #fff; border-radius: 6px; box-shadow: 0 0 2rem rgba(136,152,170,.12); }
.card-title { margin: 0; height: 81px; padding-left: 30px; padding-right: 30px; display: flex; align-items: center; font-size: 20.4px; font-weight: 600; color: #32325d; border-bottom: 1px solid #e9ecef; }
.title-row { justify-content: space-between; }
.help-q { font-size: 13px; font-weight: 600; fill: #32325d; }

.stats { margin: 0; padding: 12px 0 45px 31px; }
.stat { height: 66px; display: flex; align-items: center; font-size: 17px; }
.stat dt { width: 294px; font-weight: 600; font-size: 16.8px; }
.stat dd { margin: 0; font-weight: 400; }
.card-foot { border-top: 1px solid #e9ecef; height: 120px; padding-top: 30px; display: flex; justify-content: center; }
.btn { width: 196px; height: 60px; border: 0; border-radius: 6px; background: #2dce89; color: #fff; font: 700 16.9px "Open Sans", sans-serif; box-shadow: 0 4px 6px rgba(50,50,93,.11), 0 1px 3px rgba(0,0,0,.08); }

.card-explorer { height: 1000px; }
.axes { display: flex; gap: 36.5px; padding: 0 0 0 29px; margin-top: 33px; }
.axis { width: 200px; }
.axis label { display: block; padding-left: 10px; font-size: 16.8px; font-weight: 600; line-height: 26px; }
.select { margin-top: 16px; height: 37px; border: 1px solid #dee2e6; border-radius: 4px; display: flex; align-items: center; padding: 0 8px 0 14px; justify-content: space-between; }
.select span { width: 150px; overflow: hidden; white-space: nowrap; font-size: 17px; color: #5f6b7c; }

.plot { margin: 22px 0 0 8px; overflow: hidden; }
.grid path { fill: none; stroke: #e6e8ea; stroke-width: 1; vector-effect: non-scaling-stroke; }
.axisline { fill: none; stroke: #888; stroke-width: .8; vector-effect: non-scaling-stroke; }
.pts ellipse { rx: 20px; ry: 23px; stroke: #4a4a4a; stroke-width: .8; vector-effect: non-scaling-stroke; }
.b { fill: #1f77b4; }
.o { fill: #ff7f0e; }
.lg-b { fill: #1f77b4; }
.lg-o { fill: #ff7f0e; }
.lg { font-size: 14.5px; fill: #66668a; }
.tick text { font-size: 14.5px; fill: #444; }
.axis-title { font-size: 17px; fill: #8d9aae; }

.sample { margin-top: 195px; height: 400px; border-top: 1px solid #e9ecef; padding: 12px 0 0 30px; display: flex; align-items: flex-start; }
.sample-info { width: 254px; display: flex; flex-direction: column; font-size: 16.8px; line-height: 28px; color: #5a6478; padding-top: 18px; }
.sample-info strong { color: #525f7f; font-weight: 700; }
.sample-info a { color: #5e72e4; text-decoration: underline; }
.wave { overflow: visible; }
.wave-y text { font-size: 16.5px; fill: #8b97a8; text-anchor: end; }
.wave-line { fill: none; stroke: #ff4a20; stroke-width: 14px; stroke-linejoin: round; }
.wave-win { fill: rgba(120,120,120,.25); stroke: #a8a8a8; stroke-width: 2.5px; vector-effect: non-scaling-stroke; }
.wave-dot { fill: #8b97a8; stroke: #ff4a20; stroke-width: 4.5px; }
.wave-lg { font-size: 16.5px; fill: #8b97a8; }
.feedback { position: absolute; left: 1547px; top: 869px; width: 36px; height: 33px; background: #f1f2f6; border-radius: 6px; display: flex; align-items: center; justify-content: center; }

/* taskbar */
.taskbar { height: 60px; flex: none; background: #ececec; display: flex; align-items: stretch; }
.start { width: 73px; flex: none; display: flex; align-items: center; justify-content: center; padding-right: 1px; }
.search { width: 514px; flex: none; background: #fff; border: 2px solid #c9c9c9; display: flex; align-items: center; padding-left: 16px; }
.search span { margin-left: 15px; font-size: 21.6px; color: #1e1e1e; }
.slots { display: flex; flex: none; margin-left: -1px; }
.slot { width: 75px; display: flex; align-items: center; justify-content: center; position: relative; }
.ring { width: 22px; height: 22px; border: 3.5px solid #111; border-radius: 50%; display: block; }
.slot-open::after { content: ""; position: absolute; left: 7px; right: 6px; bottom: 0; height: 3px; background: #107c10; }
.slot-chrome { background: #f7f7f7; }
.slot-chrome::after { content: ""; position: absolute; left: 0; right: 0; bottom: 0; height: 4px; background: #107c10; }
.badge { position: absolute; border-radius: 50%; background: #d2d2d2; border: 1px solid #444; color: #111; font-weight: 400; display: flex; align-items: center; justify-content: center; }
.badge-mail { right: 7px; bottom: 5px; width: 25px; height: 25px; font-size: 17px; letter-spacing: -1px; }
.tray { display: flex; align-items: center; padding-left: 257px; flex: 1; position: relative; color: #111; }
.temp { margin-left: 15px; font-size: 19.2px; width: 46px; white-space: nowrap; }
.caret { margin-left: 28px; }
.lang { margin-left: 25px; font-size: 17px; }
.clock { margin-left: 0; width: 134px; display: flex; flex-direction: column; align-items: center; font-size: 18px; line-height: 28px; }
.notify { margin-left: 1px; position: relative; width: 40px; height: 36px; padding: 6px 0 0 7px; }
.badge-note { left: 16px; top: 18px; width: 27px; height: 27px; font-size: 20px; }
.tray::after { content: ""; position: absolute; right: 7px; top: 0; bottom: 0; width: 1px; background: #777; }
```
